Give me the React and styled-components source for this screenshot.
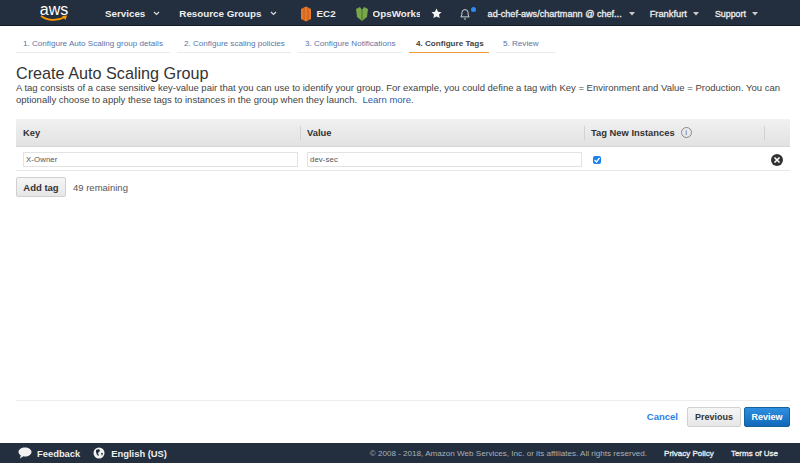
import React from 'react'
import styled, { createGlobalStyle } from 'styled-components'

const GlobalStyle = createGlobalStyle`
  html, body {
    margin: 0;
    padding: 0;
    height: 100%;
    background: #fff;
    font-family: "Liberation Sans", Arial, sans-serif;
    color: #444;
  }
  #root {
    height: 100%;
  }
`

const Page = styled.div`
  display: flex;
  flex-direction: column;
  width: 800px;
  height: 463px;
  overflow: hidden;
`

const TopBar = styled.header`
  display: flex;
  align-items: center;
  box-sizing: border-box;
  height: 26px;
  flex: none;
  padding-top: 2px;
  background: #232f3e;
  border-bottom: 1px solid #151b24;
  color: #eee;
  white-space: nowrap;
`

const Logo = styled.div`
  display: flex;
  flex-direction: column;
  align-items: center;
  width: 30px;
  margin: -2px 0 0 39px;
  color: #fff;
  font-size: 16px;
  line-height: 12px;
  font-weight: 400;
  svg {
    display: block;
    margin-top: -1px;
  }
`

const NavItem = styled.div`
  display: flex;
  align-items: center;
  gap: ${(p) => p.$gap || 8}px;
  margin-left: ${(p) => p.$left}px;
  font-weight: 700;
  font-size: 9.8px;
`

const AccountItem = styled.div`
  display: flex;
  align-items: center;
  gap: ${(p) => p.$gap || 6}px;
  margin-left: ${(p) => p.$left}px;
  font-size: ${(p) => p.$size}px;
  -webkit-text-stroke: 0.3px #eee;
`

const Clip = styled.span`
  display: block;
  width: ${(p) => p.$width}px;
  overflow: hidden;
`

const IconSlot = styled.span`
  position: relative;
  display: flex;
  margin-left: ${(p) => p.$left}px;
`

const Dot = styled.span`
  position: absolute;
  top: 0;
  right: -5px;
  width: 5px;
  height: 5px;
  border-radius: 50%;
  background: #2b8bf0;
`

const Tabs = styled.nav`
  display: flex;
  gap: 7px;
  padding: 8px 16px 0;
  flex: none;
`

const Tab = styled.div`
  width: ${(p) => p.$width}px;
  box-sizing: border-box;
  height: 19px;
  padding: 2px 0 0 7px;
  font-size: 8.1px;
  line-height: 16px;
  white-space: nowrap;
  color: ${(p) => (p.$active ? '#444' : '#5a75a8')};
  font-weight: ${(p) => (p.$active ? 700 : 400)};
  border-bottom: 1px solid ${(p) => (p.$active ? '#f09a3a' : '#eaeaea')};
`

const Main = styled.main`
  flex: 1;
  display: flex;
  flex-direction: column;
  padding: 0 10px 0 16px;
  min-height: 0;
`

const Title = styled.h1`
  margin: 11px 0 0;
  font-size: 16.2px;
  line-height: 18px;
  font-weight: 400;
  color: #333;
`

const Intro = styled.p`
  margin: 0;
  font-size: 9.5px;
  line-height: 12px;
  color: #444;
  white-space: nowrap;
`

const LearnMore = styled.a`
  color: #2a5ca8;
`

const Table = styled.div`
  margin-top: 13px;
`

const HeaderRow = styled.div`
  display: grid;
  grid-template-columns: 284px 284px 180px 26px;
  align-items: center;
  height: 28px;
  box-sizing: border-box;
  background: linear-gradient(#f1f1f1, #e2e2e2);
  border-bottom: 1px solid #d5d5d5;
  font-size: 9.4px;
  font-weight: 700;
  color: #333;
`

const HeaderCell = styled.div`
  display: flex;
  align-items: center;
  gap: 6px;
  height: 14px;
  padding-left: ${(p) => (p.$first ? 7 : 6)}px;
  border-left: ${(p) => (p.$first ? 'none' : '1px solid #d2d2d2')};
`

const InfoIcon = styled.span`
  display: flex;
  align-items: center;
  justify-content: center;
  width: 11px;
  height: 11px;
  box-sizing: border-box;
  border: 1px solid #888;
  border-radius: 50%;
  font-size: 8px;
  font-weight: 400;
  color: #666;
`

const BodyRow = styled.div`
  display: grid;
  grid-template-columns: 284px 284px 180px 26px;
  align-items: center;
  height: 24px;
  padding-top: 2px;
  box-sizing: border-box;
  border-bottom: 1px solid #e6e6e6;
`

const Cell = styled.div`
  display: flex;
  align-items: center;
  justify-content: ${(p) => (p.$end ? 'flex-end' : 'flex-start')};
  padding-left: ${(p) => p.$pad || 7}px;
  padding-right: ${(p) => (p.$end ? 7 : 0)}px;
`

const TagInput = styled.div`
  box-sizing: border-box;
  width: 275px;
  height: 15px;
  padding-left: 2px;
  border: 1px solid #e3e3e3;
  font-size: 7.8px;
  line-height: 13px;
  color: #555;
  letter-spacing: 0.1px;
`

const Check = styled.span`
  display: flex;
  width: 8px;
  height: 8px;
  border-radius: 2px;
  background: #1a7ff0;
`

const AddRow = styled.div`
  display: flex;
  align-items: center;
  gap: 7px;
  margin-top: 6px;
  font-size: 9.5px;
  color: #555;
`

const Button = styled.button`
  box-sizing: border-box;
  height: 20px;
  width: ${(p) => p.$width}px;
  padding: 0;
  border-radius: 2px;
  border: 1px solid ${(p) => (p.$primary ? '#15629f' : '#d0d0d0')};
  background: ${(p) =>
    p.$primary
      ? 'linear-gradient(#2d8fe0, #1268b8)'
      : 'linear-gradient(#f6f6f6, #e6e6e6)'};
  color: ${(p) => (p.$primary ? '#fff' : '#333')};
  font-family: inherit;
  font-size: ${(p) => p.$size || 9.5}px;
  font-weight: 700;
`

const ActionBar = styled.div`
  display: flex;
  align-items: flex-start;
  justify-content: flex-end;
  gap: 3px;
  margin-top: auto;
  padding-top: 6px;
  height: 43px;
  box-sizing: border-box;
  border-top: 1px solid #ececec;
  flex: none;
`

const CancelLink = styled.a`
  margin-right: 6px;
  line-height: 20px;
  font-size: 9.5px;
  font-weight: 700;
  color: #2e7fdf;
`

const Footer = styled.footer`
  display: flex;
  align-items: center;
  height: 20px;
  flex: none;
  padding: 0 22px 0 18px;
  background: #232f3e;
  color: #eee;
  font-size: 9.4px;
  font-weight: 700;
  white-space: nowrap;
`

const FooterItem = styled.div`
  display: flex;
  align-items: center;
  gap: ${(p) => p.$gap}px;
  margin-right: 13px;
`

const Copyright = styled.span`
  margin-left: auto;
  margin-right: 17px;
  font-size: 8.1px;
  font-weight: 400;
  color: #a9b0b8;
`

const FooterLink = styled.span`
  margin-left: ${(p) => p.$left || 0}px;
  font-size: 8px;
  font-weight: 400;
  -webkit-text-stroke: 0.3px #eee;
`

function Caret() {
  return (
    <svg width="7" height="5" viewBox="0 0 7 5">
      <path d="M1 1l2.500 2.500L6 1" fill="none" stroke="#ddd" strokeWidth="1.200" />
    </svg>
  )
}

function SolidCaret() {
  return (
    <svg width="6" height="4" viewBox="0 0 6 4">
      <path d="M0 0h6L3 3.500z" fill="#ccc" />
    </svg>
  )
}

export default function App() {
  return (
    <Page>
      <GlobalStyle />
      <TopBar>
        <Logo>
          aws
          <svg width="28" height="7" viewBox="0 0 28 7">
            <path d="M1 1c7 5 17 5 24 1" fill="none" stroke="#f90" strokeWidth="1.600" />
            <path d="M22 1l5-.5-1.500 4.500z" fill="#f90" />
          </svg>
        </Logo>
        <NavItem $left={36}>
          Services <Caret />
        </NavItem>
        <NavItem $left={19}>
          Resource Groups <Caret />
        </NavItem>
        <NavItem $left={23} $gap={5}>
          <svg width="12" height="16" viewBox="0 0 12 16">
            <path d="M1 3l5-2.500L11 3v10l-5 2.500L1 13z" fill="#e8772a" />
            <path d="M4 2v12M8 2v12" stroke="#b9541a" strokeWidth="0.8" />
          </svg>
          EC2
        </NavItem>
        <NavItem $left={20} $gap={5}>
          <svg width="12" height="16" viewBox="0 0 12 16">
            <path d="M0 3l4-2 2 3 2-3 4 2-1 8-5 4-5-4z" fill="#78a64a" />
            <path d="M6 4v10" stroke="#4f7a2e" strokeWidth="1.200" />
          </svg>
          <Clip $width={47}>OpsWorks</Clip>
        </NavItem>
        <IconSlot $left={11}>
          <svg width="11" height="11" viewBox="0 0 24 24">
            <path d="M12 1l3.400 7 7.600 1-5.500 5.300 1.300 7.700L12 18.300 5.200 22l1.300-7.700L1 9l7.600-1z" fill="#f4f4f4" />
          </svg>
        </IconSlot>
        <IconSlot $left={17}>
          <svg width="12" height="13" viewBox="3 0 18 25">
            <path d="M4 19c2-2 2-5 2-8a6 6 0 0112 0c0 3 0 6 2 8zM10 23h4" fill="none" stroke="#eee" strokeWidth="1.600" />
          </svg>
          <Dot />
        </IconSlot>
        <AccountItem $left={17} $size={9.1} $gap={7}>
          ad-chef-aws/chartmann @ chef... <SolidCaret />
        </AccountItem>
        <AccountItem $left={15} $size={9.3}>
          Frankfurt <SolidCaret />
        </AccountItem>
        <AccountItem $left={16} $size={8.9}>
          Support <SolidCaret />
        </AccountItem>
      </TopBar>

      <Tabs>
        <Tab $width={154}>1. Configure Auto Scaling group details</Tab>
        <Tab $width={114}>2. Configure scaling policies</Tab>
        <Tab $width={104}>3. Configure Notifications</Tab>
        <Tab $width={80} $active>4. Configure Tags</Tab>
        <Tab $width={60}>5. Review</Tab>
      </Tabs>

      <Main>
        <Title>Create Auto Scaling Group</Title>
        <Intro>
          A tag consists of a case sensitive key-value pair that you can use to identify your group. For example, you could define a tag with Key = Environment and Value = Production. You can
        </Intro>
        <Intro>
          optionally choose to apply these tags to instances in the group when they launch.&nbsp; <LearnMore>Learn more</LearnMore>.
        </Intro>

        <Table>
          <HeaderRow>
            <HeaderCell $first>Key</HeaderCell>
            <HeaderCell>Value</HeaderCell>
            <HeaderCell>
              Tag New Instances <InfoIcon>i</InfoIcon>
            </HeaderCell>
            <HeaderCell />
          </HeaderRow>
          <BodyRow>
            <Cell>
              <TagInput>X-Owner</TagInput>
            </Cell>
            <Cell>
              <TagInput>dev-sec</TagInput>
            </Cell>
            <Cell $pad={9}>
              <Check>
                <svg width="8" height="8" viewBox="0 0 8 8">
                  <path d="M1.500 4l2 2 3-4" fill="none" stroke="#fff" strokeWidth="1.300" />
                </svg>
              </Check>
            </Cell>
            <Cell $end>
              <svg width="12" height="12" viewBox="0 0 12 12">
                <circle cx="6" cy="6" r="6" fill="#333" />
                <path d="M3.500 3.500l5 5M8.500 3.500l-5 5" stroke="#fff" strokeWidth="1.600" />
              </svg>
            </Cell>
          </BodyRow>
        </Table>

        <AddRow>
          <Button $width={50}>Add tag</Button>
          49 remaining
        </AddRow>

        <ActionBar>
          <CancelLink>Cancel</CancelLink>
          <Button $width={54} $size={9}>Previous</Button>
          <Button $width={46} $size={9} $primary>Review</Button>
        </ActionBar>
      </Main>

      <Footer>
        <FooterItem $gap={5}>
          <svg width="14" height="12" viewBox="0 0 14 12">
            <path d="M7 .5c3.600 0 6.500 2 6.500 4.500S10.600 9.500 7 9.500c-.6 0-1.200 0-1.700-.2L2 11.500l.8-3.200C1.400 7.500.5 6.300.5 5 .5 2.500 3.400.5 7 .5z" fill="#f2f2f2" />
          </svg>
          Feedback
        </FooterItem>
        <FooterItem $gap={6}>
          <svg width="12" height="12" viewBox="0 0 12 12">
            <circle cx="6" cy="6" r="5.500" fill="#f2f2f2" />
            <path d="M3 3l3-1 1 2-2 2 1 3-2-1-1-3zM8 6l2 0-1 3z" fill="#232f3e" />
          </svg>
          English (US)
        </FooterItem>
        <Copyright>© 2008 - 2018, Amazon Web Services, Inc. or its affiliates. All rights reserved.</Copyright>
        <FooterLink>Privacy Policy</FooterLink>
        <FooterLink $left={17}>Terms of Use</FooterLink>
      </Footer>
    </Page>
  )
}
